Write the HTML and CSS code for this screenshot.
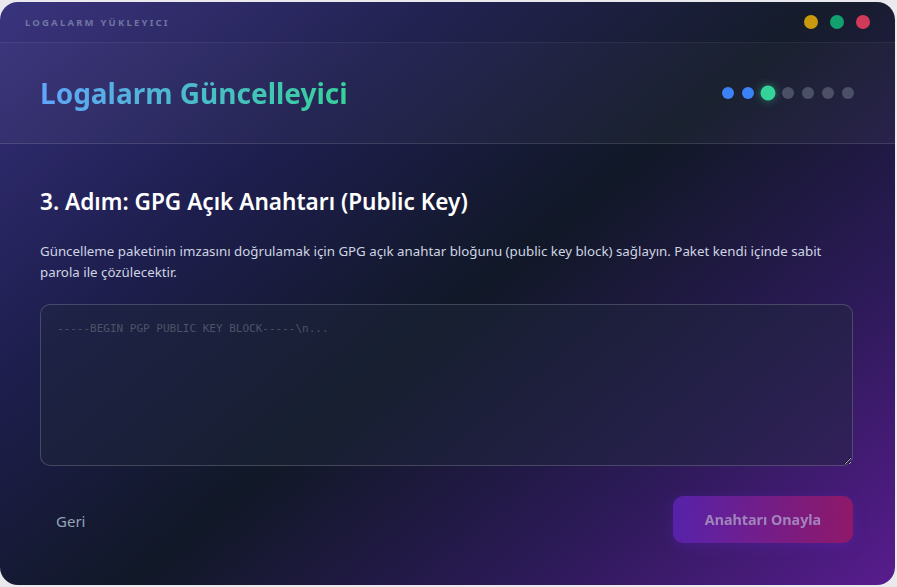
FILE: index.html
```html
<!DOCTYPE html>
<html lang="tr">
<head>
    <meta charset="UTF-8">
    <meta name="viewport" content="width=device-width, initial-scale=1.0">
    <title>Logalarm Güncelleyici</title>
    <link rel="stylesheet" href="styles.css">
</head>
<body>

    <div class="window">
        <div class="titlebar">
            <span class="app-name">LOGALARM YÜKLEYICI</span>
            <div class="win-controls">
                <span class="ctl ctl-yellow"></span>
                <span class="ctl ctl-green"></span>
                <span class="ctl ctl-red"></span>
            </div>
        </div>

        <header class="head">
            <h1>Logalarm Güncelleyici</h1>
            <div class="steps">
                <span class="step done"></span>
                <span class="step done"></span>
                <span class="step current"></span>
                <span class="step"></span>
                <span class="step"></span>
                <span class="step"></span>
                <span class="step"></span>
            </div>
        </header>

        <main class="content">
            <h2>3. Adım: GPG Açık Anahtarı (Public Key)</h2>
            <p class="desc">Güncelleme paketinin imzasını doğrulamak için GPG açık anahtar bloğunu (public key block) sağlayın. Paket kendi içinde sabit parola ile çözülecektir.</p>
            <textarea class="key-input" placeholder="-----BEGIN PGP PUBLIC KEY BLOCK-----\n..."></textarea>
        </main>

        <footer class="actions">
            <button class="btn-back">Geri</button>
            <button class="btn-confirm" disabled>Anahtarı Onayla</button>
        </footer>
    </div>

</body>
</html>
```

FILE: styles.css
```css
body {
    margin: 0;
    padding: 0;
    background-color: #e9e9ee;
    font-family: "Noto Sans", "Open Sans", sans-serif;
    overflow: hidden;
}
.window {
    width: 895px;
    height: 583px;
    margin-top: 2px;
    border-radius: 18px;
    overflow: hidden;
    display: flex;
    flex-direction: column;
    background: linear-gradient(140deg, #36307c 0%, #1e1e4e 28%, #111827 52%, #2a1a55 75%, #581c8e 100%);
}
.titlebar {
    height: 40px;
    display: flex;
    align-items: center;
    justify-content: space-between;
    padding: 0 25px 0 25px;
    border-bottom: 1px solid rgba(255,255,255,0.08);
    background: rgba(255,255,255,0.02);
}
.app-name {
    font-size: 9.5px;
    font-weight: 700;
    letter-spacing: 2.2px;
    color: #7275a3;
}
.win-controls {
    display: flex;
    gap: 12px;
}
.ctl {
    width: 14px;
    height: 14px;
    border-radius: 50%;
}
.ctl-yellow { background-color: #ca9a0e; }
.ctl-green { background-color: #12a06f; }
.ctl-red { background-color: #d13a58; }

.head {
    height: 100px;
    display: flex;
    align-items: center;
    justify-content: space-between;
    padding: 0 41px 0 40px;
    border-bottom: 1px solid rgba(255,255,255,0.12);
    background: rgba(255,255,255,0.04);
}
.head h1 {
    margin: 0;
    font-size: 28px;
    font-weight: 700;
    background: linear-gradient(90deg, #60a5fa, #34d399);
    -webkit-background-clip: text;
    background-clip: text;
    color: transparent;
}
.steps {
    display: flex;
    align-items: center;
    gap: 8px;
}
.step {
    width: 12px;
    height: 12px;
    border-radius: 50%;
    background-color: #4b5067;
}
.step.done {
    background-color: #3b82f6;
}
.step.current {
    background-color: #34d399;
    transform: scale(1.25);
    box-shadow: 0 0 7px rgba(52,211,153,0.5);
}

.content {
    flex: 1;
    padding: 42px 42px 0 40px;
}
.content h2 {
    margin: 0;
    font-size: 22.6px;
    font-weight: 600;
    color: #ffffff;
}
.desc {
    max-width: 790px;
    margin: 24px 0 21px;
    font-size: 13.3px;
    line-height: 21px;
    color: #cfd5e2;
}
.key-input {
    display: block;
    box-sizing: border-box;
    width: 100%;
    height: 162px;
    padding: 17px 16px;
    border: 1px solid rgba(255,255,255,0.18);
    border-radius: 10px;
    background-color: rgba(30,41,59,0.45);
    color: #e2e8f0;
    font-family: "DejaVu Sans Mono", monospace;
    font-size: 11px;
    outline: none;
}
.key-input::placeholder {
    color: #4a5468;
}

.actions {
    height: 90px;
    display: flex;
    align-items: flex-start;
    justify-content: space-between;
    padding: 0 42px 0 40px;
}
.btn-back {
    margin-top: 6px;
    padding: 10px 16px;
    background: none;
    border: none;
    font-family: inherit;
    font-size: 15px;
    color: #94a3b8;
    cursor: pointer;
}
.btn-confirm {
    width: 180px;
    height: 47px;
    margin-top: 1px;
    border: none;
    border-radius: 10px;
    background: linear-gradient(90deg, #6d28d9, #be185d);
    opacity: 0.6;
    color: #e2c8ee;
    font-family: inherit;
    font-size: 14.3px;
    font-weight: 700;
    box-shadow: 0 4px 14px rgba(109,40,217,0.35);
}
```
